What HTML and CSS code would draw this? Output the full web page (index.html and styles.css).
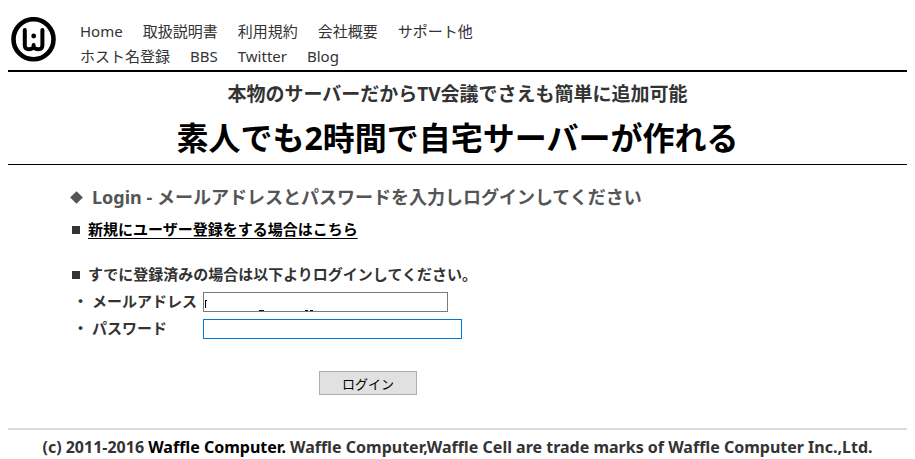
FILE: index.html
```html
<!DOCTYPE html>
<html lang="ja">

<head>
    <meta charset="UTF-8">
    <meta name="viewport" content="width=device-width, initial-scale=1.0">
    <title>Waffle Computer - Login</title>
    <link rel="stylesheet" href="styles.css">
</head>

<body>
    <header class="header">
        <a href="#" class="logo" aria-label="Waffle Computer">
            <svg width="46" height="46" viewBox="0 0 46 46" fill="none" stroke="#000" stroke-linecap="round" stroke-linejoin="round">
                <circle cx="22.5" cy="22.2" r="20" stroke-width="4.6" />
                <path d="M13.8 13V28.5Q14 32.3 17.6 32.3Q20.5 32.3 22.6 30.5Q24.7 32.3 27.6 32.3Q31.2 32.3 31.4 28.5V13M22.6 30.5V28" stroke-width="4" />
                <circle cx="22.7" cy="19" r="2.4" fill="#000" stroke="none" />
            </svg>
        </a>
        <nav class="nav">
            <a href="#">Home</a>
            <a href="#">取扱説明書</a>
            <a href="#">利用規約</a>
            <a href="#">会社概要</a>
            <a href="#">サポート他</a>
            <a href="#">ホスト名登録</a>
            <a href="#">BBS</a>
            <a href="#">Twitter</a>
            <a href="#">Blog</a>
        </nav>
    </header>

    <div class="hero">
        <p class="tagline">本物のサーバーだからTV会議でさえも簡単に追加可能</p>
        <h1>素人でも2時間で自宅サーバーが作れる</h1>
    </div>

    <main class="content">
        <h2><span class="diamond"></span>Login - メールアドレスとパスワードを入力しログインしてください</h2>
        <p class="item"><span class="square"></span><a href="#">新規にユーザー登録をする場合はこちら</a></p>
        <p class="item">
            <span class="square"></span>すでに登録済みの場合は以下よりログインしてください。
        </p>
        <form class="login-form">
            <div class="row">
                <label for="email">・ メールアドレス</label>
                <div class="field">
                    <input type="text" id="email" class="email">
                    <svg class="marks" width="120" height="14" viewBox="0 0 120 14" aria-hidden="true">
                        <path d="M2 3h1v8h-1zM3 3h1v1h-1zM56 13h5v1h-5zM102 13h3v1h-3zM107 13h3v1h-3z" />
                    </svg>
                </div>
            </div>
            <div class="row">
                <label for="password">・ パスワード</label>
                <input type="password" id="password" class="password">
            </div>
            <button type="submit">ログイン</button>
        </form>
    </main>

    <footer class="footer">
        (c) 2011-2016 <a href="#">Waffle Computer.</a> Waffle Computer,Waffle Cell are trade marks of Waffle Computer Inc.,Ltd.
    </footer>
</body>

</html>
```
FILE: styles.css
```css
* {
    box-sizing: border-box;
}

body {
    margin: 8px;
    margin-bottom: 0;
    background: #fff;
    color: #333;
    font-family: "Noto Sans", "Noto Sans CJK JP", sans-serif;
    font-size: 15px;
    line-height: 25px;
}

h1,
h2,
p {
    margin: 0;
}

.header {
    display: flex;
    align-items: center;
    gap: 23px;
    height: 64px;
    border-bottom: 2px solid #000;
}

.logo {
    display: block;
    margin: 2px 0 0 3px;
}

.logo svg {
    display: block;
}

.nav {
    display: flex;
    flex-wrap: wrap;
    column-gap: 20px;
    max-width: 480px;
    margin-top: 10px;
}

.nav a {
    color: #333;
    text-decoration: none;
}

.hero {
    padding-top: 10px;
    border-bottom: 1px solid #000;
    text-align: center;
}

.tagline {
    margin-bottom: 5px;
    font-size: 19px;
    font-weight: bold;
}

h1 {
    color: #000;
    font-size: 32px;
    line-height: 52px;
}

.content {
    padding: 19px 0 0 62px;
}

h2 {
    display: flex;
    align-items: center;
    gap: 8px;
    color: #555;
    font-size: 18px;
    line-height: 26px;
}

.diamond {
    width: 9px;
    height: 9px;
    margin: 0 3px 0 2px;
    background: #555;
    transform: rotate(45deg);
}

.item {
    display: flex;
    align-items: center;
    gap: 8px;
    margin: 7px 0 20px;
    font-weight: bold;
}

.item + .item {
    margin-bottom: 1px;
}

.item a {
    color: #000;
    text-underline-offset: 3px;
}

.square {
    width: 8px;
    height: 8px;
    margin-left: 2px;
    background: #333;
}

.login-form {
    width: 400px;
}

.row {
    display: flex;
    align-items: center;
    height: 27px;
}

.row label {
    width: 133px;
    padding-left: 3px;
    font-weight: bold;
    white-space: nowrap;
}

.field {
    position: relative;
    display: flex;
}

input {
    height: 20px;
    padding: 1px 2px;
    border: 1px solid #7a7a7a;
    background: #fff;
    font-size: 13px;
    outline: none;
}

.email {
    width: 245px;
}

.password {
    width: 259px;
    border-color: #0078d7;
}

/* clipped bits of the remembered address */
.marks {
    position: absolute;
    left: 0;
    bottom: 1px;
    pointer-events: none;
}

button {
    display: block;
    width: 98px;
    height: 24px;
    margin: 29px 0 0 249px;
    padding: 0;
    border: 1px solid #adadad;
    background: #e1e1e1;
    color: #000;
    font-family: "Noto Sans CJK JP", sans-serif;
    font-size: 13px;
}

.footer {
    margin-top: 33px;
    padding-top: 5px;
    border-top: 2px solid #ddd;
    font-size: 16px;
    font-weight: bold;
    text-align: center;
}

.footer a {
    color: #000;
    text-decoration: none;
}
```
